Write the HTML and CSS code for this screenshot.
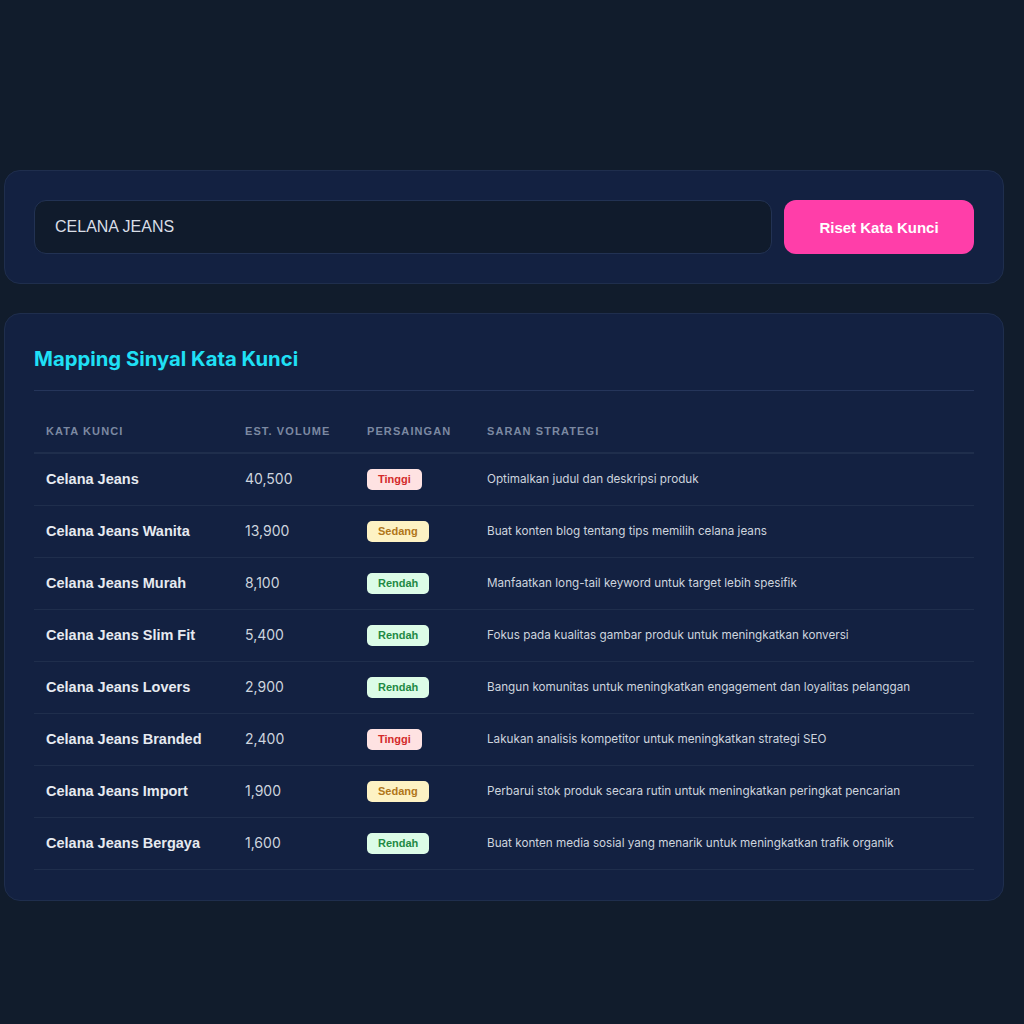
FILE: index.html
```html
<!DOCTYPE html>
<html lang="id">
<head>
  <meta charset="UTF-8">
  <meta name="viewport" content="width=device-width, initial-scale=1.0">
  <title>Riset Kata Kunci</title>
  <link rel="stylesheet" href="styles.css">
</head>
<body>
  <main class="wrap">
    <section class="panel search-panel">
      <form class="search-form" onsubmit="return false">
        <input class="search-input" type="text" value="CELANA JEANS">
        <button class="search-btn" type="submit">Riset Kata Kunci</button>
      </form>
    </section>

    <section class="panel result-panel">
      <h2 class="result-title">Mapping Sinyal Kata Kunci</h2>
      <table class="kw-table">
        <colgroup>
          <col class="c-kw">
          <col class="c-vol">
          <col class="c-comp">
          <col>
        </colgroup>
        <thead>
          <tr>
            <th>Kata Kunci</th>
            <th>Est. Volume</th>
            <th>Persaingan</th>
            <th>Saran Strategi</th>
          </tr>
        </thead>
        <tbody>
          <tr>
            <td class="kw">Celana Jeans</td>
            <td class="vol">40,500</td>
            <td><span class="badge high">Tinggi</span></td>
            <td class="tip">Optimalkan judul dan deskripsi produk</td>
          </tr>
          <tr>
            <td class="kw">Celana Jeans Wanita</td>
            <td class="vol">13,900</td>
            <td><span class="badge mid">Sedang</span></td>
            <td class="tip">Buat konten blog tentang tips memilih celana jeans</td>
          </tr>
          <tr>
            <td class="kw">Celana Jeans Murah</td>
            <td class="vol">8,100</td>
            <td><span class="badge low">Rendah</span></td>
            <td class="tip">Manfaatkan long-tail keyword untuk target lebih spesifik</td>
          </tr>
          <tr>
            <td class="kw">Celana Jeans Slim Fit</td>
            <td class="vol">5,400</td>
            <td><span class="badge low">Rendah</span></td>
            <td class="tip">Fokus pada kualitas gambar produk untuk meningkatkan konversi</td>
          </tr>
          <tr>
            <td class="kw">Celana Jeans Lovers</td>
            <td class="vol">2,900</td>
            <td><span class="badge low">Rendah</span></td>
            <td class="tip">Bangun komunitas untuk meningkatkan engagement dan loyalitas pelanggan</td>
          </tr>
          <tr>
            <td class="kw">Celana Jeans Branded</td>
            <td class="vol">2,400</td>
            <td><span class="badge high">Tinggi</span></td>
            <td class="tip">Lakukan analisis kompetitor untuk meningkatkan strategi SEO</td>
          </tr>
          <tr>
            <td class="kw">Celana Jeans Import</td>
            <td class="vol">1,900</td>
            <td><span class="badge mid">Sedang</span></td>
            <td class="tip">Perbarui stok produk secara rutin untuk meningkatkan peringkat pencarian</td>
          </tr>
          <tr>
            <td class="kw">Celana Jeans Bergaya</td>
            <td class="vol">1,600</td>
            <td><span class="badge low">Rendah</span></td>
            <td class="tip">Buat konten media sosial yang menarik untuk meningkatkan trafik organik</td>
          </tr>
        </tbody>
      </table>
    </section>
  </main>
</body>
</html>
```

FILE: styles.css
```css
* {
  box-sizing: border-box;
}
body {
  margin: 0;
  background-color: #111c2c;
  font-family: Inter, "Liberation Sans", sans-serif;
  color: #cbd5e1;
}
.wrap {
  width: 1000px;
  margin-left: 4px;
  padding-top: 170px;
  display: flex;
  flex-direction: column;
  gap: 29px;
}
.panel {
  background-color: #132141;
  border: 1px solid #1f2e4d;
  border-radius: 16px;
  padding: 29px;
}
.result-panel {
  padding-bottom: 30px;
}
.search-form {
  display: flex;
  gap: 12px;
}
.search-input {
  flex: 1;
  height: 54px;
  padding: 0 20px;
  background-color: #101b2c;
  border: 1px solid #223253;
  border-radius: 12px;
  color: #d9dee6;
  font-family: "Liberation Sans", Arial, sans-serif;
  font-size: 16px;
  outline: none;
}
.search-btn {
  width: 190px;
  height: 54px;
  background-color: #ff3ea9;
  color: #fff;
  border: none;
  border-radius: 12px;
  font-family: "Liberation Sans", Arial, sans-serif;
  font-weight: bold;
  font-size: 15px;
  cursor: pointer;
}
.result-title {
  margin: 2px 0 0;
  padding-bottom: 17px;
  border-bottom: 1px solid #25355a;
  color: #1fe0f5;
  font-size: 20.3px;
  line-height: 28px;
  font-weight: 700;
}
.kw-table {
  width: 100%;
  margin-top: 21px;
  border-collapse: collapse;
  table-layout: fixed;
}
.c-kw {
  width: 199px;
}
.c-vol {
  width: 122px;
}
.c-comp {
  width: 120px;
}
.kw-table th {
  padding: 11px 12px 12px;
  text-align: left;
  font-family: "Liberation Sans", Arial, sans-serif;
  font-size: 11px;
  font-weight: bold;
  letter-spacing: 1.1px;
  text-transform: uppercase;
  color: #7c89a2;
  line-height: 17px;
  border-bottom: 2px solid #1f2e4c;
}
.kw-table td {
  height: 52px;
  padding: 0 12px;
  line-height: 20px;
  vertical-align: middle;
  border-bottom: 1px solid #1f2e4c;
  white-space: nowrap;
}
.kw {
  font-family: "Liberation Sans", Arial, sans-serif;
  font-weight: bold;
  font-size: 14.5px;
  color: #e6eaf0;
}
.vol {
  font-size: 14px;
  color: #cdd4de;
}
.tip {
  font-size: 11.7px;
  color: #cdd4de;
}
.badge {
  display: inline-block;
  vertical-align: middle;
  padding: 2px 11px;
  border-radius: 5px;
  font-family: "Liberation Sans", Arial, sans-serif;
  font-size: 11px;
  font-weight: bold;
  line-height: 17px;
}
.high {
  background-color: #fee2e2;
  color: #d32a2a;
}
.mid {
  background-color: #fdf2c3;
  color: #b0761a;
}
.low {
  background-color: #dcfce7;
  color: #1f8a45;
}
```
